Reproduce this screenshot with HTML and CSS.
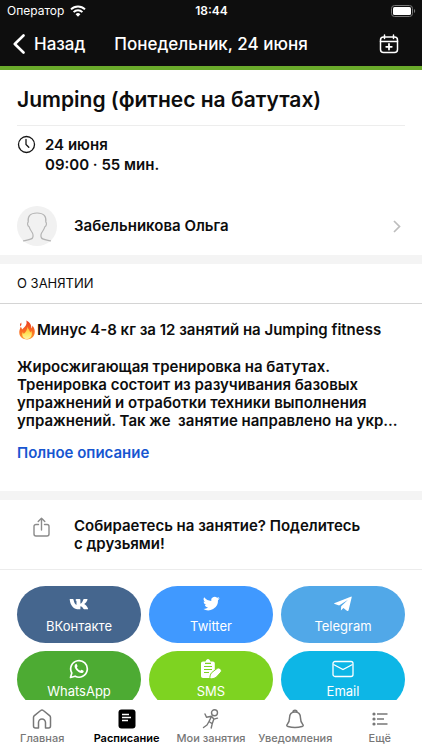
FILE: index.html
```html
<!DOCTYPE html>
<html lang="ru">
<head>
<meta charset="utf-8">
<meta name="viewport" content="width=device-width, initial-scale=1">
<title>Jumping (фитнес на батутах)</title>
<link rel="stylesheet" href="styles.css">
</head>
<body>
<div class="app">
  <header class="header">
    <div class="status">
      <div class="carrier">
        <span>Оператор</span>
        <svg width="16" height="12" viewBox="0 0 16 12" fill="none" stroke="#fff" stroke-width="2"><path d="M1 4.400a10 10 0 0 1 14 0M3.600 7.100a6.200 6.200 0 0 1 8.800 0"/><path d="M5.600 9.200a3.400 3.400 0 0 1 4.800 0L8 11.700z" fill="#fff" stroke="none"/></svg>
      </div>
      <time class="clock">18:44</time>
      <svg class="battery" width="25" height="12" viewBox="0 0 25 12"><rect x=".5" y=".5" width="21" height="11" rx="3" fill="none" stroke="#777"/><rect x="2" y="2" width="18" height="8" rx="1.500" fill="#fff"/><path d="M23 4v4c1.600-.8 1.600-3.200 0-4z" fill="#777"/></svg>
    </div>
    <div class="bar">
      <button class="back" type="button">
        <svg width="12" height="20" viewBox="0 0 12 20" fill="none" stroke="#fff" stroke-width="2.600" stroke-linecap="round" stroke-linejoin="round"><path d="M10.500 1.500 1.800 10l8.700 8.500"/></svg>
        <span>Назад</span>
      </button>
      <div class="date">Понедельник, 24 июня</div>
      <button class="calendar" type="button" aria-label="Добавить в календарь">
        <svg width="20" height="20" viewBox="0 0 20 20" fill="none" stroke="#fff" stroke-width="1.500" stroke-linecap="round"><rect x="1.500" y="3" width="17" height="15.500" rx="3"/><path d="M1.500 7.500h17M5.500 1v3.500M14.500 1v3.500"/><path d="M10 10v5.600M7.200 12.800h5.600" stroke-width="1.800"/></svg>
      </button>
    </div>
  </header>

  <main class="content">
    <section class="summary">
      <h1>Jumping (фитнес на батутах)</h1>
      <div class="when">
        <svg width="19" height="19" viewBox="0 0 19 19" fill="none" stroke="#151515" stroke-width="1.300" stroke-linecap="round"><circle cx="9.500" cy="9.500" r="8"/><path d="M9 4.500v5l2.800 2.800"/></svg>
        <p>24 июня<br>09:00 · 55 мин.</p>
      </div>
      <a class="trainer" href="#trainer">
        <svg class="avatar" width="40" height="40" viewBox="0 0 40 40"><circle cx="20" cy="20" r="20" fill="#f1f1f1"/><path d="M6.500 34.800c3.500-1 7.500-1 9-2.800 1-2 .5-4.500-1-6.500-1.300-1.800-1.900-3-2.400-4.800-1.700-1-2-3.800-.9-4.700C10.500 10.500 13 7 20 7s9.500 3.500 8.800 9c1.100.9.800 3.700-.9 4.700-.5 1.800-1.100 3-2.400 4.800-1.500 2-2 4.500-1 6.500 1.500 1.800 5.500 1.800 9 2.800" fill="none" stroke="#b4b4b4" stroke-width="1.200" stroke-linecap="round"/></svg>
        <span>Забельникова Ольга</span>
        <svg class="chevron" width="8" height="13" viewBox="0 0 8 13" fill="none" stroke="#bdbdbd" stroke-width="1.700"><path d="m1 1 5.500 5.500L1 12"/></svg>
      </a>
    </section>

    <section class="about">
      <h2>О ЗАНЯТИИ</h2>
      <div class="description">
        <p class="lead"><svg width="20" height="20" viewBox="0 0 20 20" role="img" aria-label="Огонь"><defs><linearGradient id="flame" x1="0" y1="0" x2="0" y2="1"><stop offset="0" stop-color="#e93b20"/><stop offset=".55" stop-color="#fa6b22"/><stop offset="1" stop-color="#ff9b2d"/></linearGradient><linearGradient id="core" x1="0" y1="0" x2="0" y2="1"><stop offset="0" stop-color="#ffb02e"/><stop offset=".6" stop-color="#ffe75e"/><stop offset="1" stop-color="#fff3a8"/></linearGradient></defs><path d="M9.200.5c4 1.800 5.500 4.700 5 8 .8-.7 1.300-1.700 1.200-2.900 2.200 2.700 2.800 5.400 2.200 8-.8 3.700-3.700 5.900-7.500 5.900-4.200 0-7.500-2.500-7.800-6.400-.2-2.500.8-4.300 1.400-6.300.8.8 1.200 1.700 1.300 2.800C8 7 10.700 4.300 9.200.5z" fill="url(#flame)"/><path d="m3 4 1.300-1.500.1 2.500L3 6.500z" fill="#f0532a"/><path d="M10.500 6.500c.3 2.500 2.500 3.800 2.600 6 .7-.4 1-1 1.100-1.800 1.700 3.500.1 8.300-4.100 8.300-3.800 0-5.700-3.400-4.500-6.800.6.500.9 1 1.100 1.700 2.200-1.700 3.500-4.200 3.800-7.400z" fill="url(#core)"/></svg><span>Минус 4-8 кг за 12 занятий на Jumping fitness</span></p>
        <p class="body">Жиросжигающая тренировка на батутах.<br>Тренировка состоит из разучивания базовых<br>упражнений и отработки техники выполнения<br>упражнений. Так же&nbsp; занятие направлено на укр...</p>
        <a class="more" href="#full">Полное описание</a>
      </div>
    </section>

    <section class="share">
      <div class="invite">
        <svg width="17" height="21" viewBox="0 0 17 21" fill="none" stroke="#8b8b8b" stroke-width="1.400" stroke-linecap="round" stroke-linejoin="round"><path d="M5.500 7.500H3a2 2 0 0 0-2 2V17a2 2 0 0 0 2 2h11a2 2 0 0 0 2-2V9.500a2 2 0 0 0-2-2h-2.500M8.500 13V1.500M5.200 4.500l3.300-3.300 3.300 3.300"/></svg>
        <p>Собираетесь на занятие? Поделитесь<br>с друзьями!</p>
      </div>
      <div class="targets">
        <button class="pill vk" type="button">
          <svg width="20" height="20" viewBox="0 0 20 20" fill="#fff"><path d="M10.200 15.300C4.500 15.300 1.400 11.600.7 5.400c0-.3.100-.4.400-.4h2.800c.3 0 .5.200.6.500.5 3 1.700 5.100 3 5.400V7.800c0-.9-.3-1.200-1-1.500 0-.8.700-1.300 1.600-1.300h2.500c.6 0 .8.300.8.900v3.900c1.300-.4 2.300-2.300 2.900-4.200.1-.4.400-.6.800-.6h2.900c.5 0 .7.300.5.800-.6 1.800-1.800 3.300-3.300 4.300 1.600.9 2.900 2.300 3.800 4.300.2.500 0 .9-.6.900h-3.200c-.4 0-.6-.2-.8-.5-.8-1.500-1.700-2.300-3-2.500v2.500c0 .4-.2.500-.6.500z"/></svg>
          <span>ВКонтакте</span>
        </button>
        <button class="pill twitter" type="button">
          <svg width="20" height="20" viewBox="0 0 24 24" fill="#fff"><path d="M22.500 5.200c-.7.300-1.500.6-2.400.7.900-.5 1.500-1.300 1.800-2.300-.8.500-1.700.8-2.600 1a4.100 4.100 0 0 0-7 3.800A11.700 11.700 0 0 1 3.800 4a4.100 4.100 0 0 0 1.300 5.500c-.7 0-1.300-.2-1.900-.5 0 2 1.400 3.700 3.300 4.100-.6.200-1.200.2-1.900.1.500 1.600 2 2.800 3.900 2.900A8.300 8.300 0 0 1 2.400 17.800 11.700 11.700 0 0 0 20.400 7.400c.8-.6 1.500-1.300 2.100-2.200z"/></svg>
          <span>Twitter</span>
        </button>
        <button class="pill telegram" type="button">
          <svg width="20" height="20" viewBox="0 0 20 20" fill="#fff"><path d="M18.400 2.500 1.800 9c-.8.300-.8.900 0 1.100l4.300 1.400L15 5.700 8.200 12.300l-.3 4.100 2.500-2.300 3.800 2.800c.7.400 1.200.2 1.400-.6l3.100-13c.1-.7-.2-1-.3-.8z"/></svg>
          <span>Telegram</span>
        </button>
        <button class="pill whatsapp" type="button">
          <svg width="20" height="20" viewBox="0 0 20 20" fill="none" stroke="#fff" stroke-width="1.700" stroke-linejoin="round"><path d="m1.500 18.500 1.300-4.500a8.300 8.300 0 1 1 3.300 3.200z"/><path d="M6.500 5.200c.5-.5 1.100-.4 1.300.1l.7 1.700c.2.600-.7 1.200-.6 1.500.7 1.500 1.800 2.500 3.300 3.200.4.100 1-1.100 1.500-.9l1.800.9c.4.200.2 1.500-.6 2-3 2-9.300-3.900-8.200-7.100.2-.6.500-1.100.8-1.400z" fill="#fff" stroke="none"/></svg>
          <span>WhatsApp</span>
        </button>
        <button class="pill sms" type="button">
          <svg width="22" height="20" viewBox="0 0 22 20"><path d="M5.500 2.500C6 1 7 0 8 0s2 1 2.500 2.500h2.300c1.200 0 2 .8 2 2V17c0 1.200-.8 2-2 2H3c-1.200 0-2-.8-2-2V4.500c0-1.200.8-2 2-2z" fill="#fff"/><path d="M5 4.300h6M4 7.500h8M4 10.500h8M4 13.500h5" stroke="#7ed321" stroke-width="1.200"/><path d="M17 9.500c1.800-1.800 5.600 1.300 4 3.500l-4.500 5c-1.500 1.500-5.700 2.300-6.400 1.600s.2-4.600 1.500-5.900z" fill="#fff" stroke="#7ed321"/></svg>
          <span>SMS</span>
        </button>
        <button class="pill email" type="button">
          <svg width="22" height="20" viewBox="0 0 22 20" fill="none" stroke="#fff" stroke-width="1.300"><rect x="1" y="2.500" width="20" height="15" rx="2"/><path d="M1.500 5.500 11 10.500l9.500-5"/></svg>
          <span>Email</span>
        </button>
      </div>
    </section>
  </main>

  <nav class="tabs">
    <a href="#home"><svg width="20" height="20" viewBox="0 0 20 20" fill="none" stroke="#777" stroke-width="1.500" stroke-linejoin="round"><path d="M1.500 8.500c0-.8.300-1.300.9-1.800l6.300-5.200c.8-.7 1.800-.7 2.600 0l6.300 5.200c.6.500.9 1 .9 1.800V17c0 1.200-.8 2-2 2h-3v-5.500a3.500 3.500 0 0 0-7 0V19h-3c-1.200 0-2-.8-2-2z"/></svg><span>Главная</span></a>
    <a class="active" href="#schedule" aria-current="page"><svg width="20" height="20" viewBox="0 0 20 20"><rect x="1.500" y=".5" width="17" height="19" rx="3" fill="#000"/><path d="M5 5.500h7M5 8.500h9M5 11.500h6" stroke="#fff" stroke-width="1.400"/></svg><span>Расписание</span></a>
    <a href="#classes"><svg width="20" height="20" viewBox="0 0 20 20" fill="none" stroke="#777" stroke-width="1.400" stroke-linecap="round" stroke-linejoin="round"><circle cx="13.500" cy="3.800" r="3"/><path d="m4 5 1.500 3.200 5-1 2.500 3 3.500-1M10.500 7.500 8 12.500l3.200 2.300-1 4.200M8 12.500 6 16l-3.500 2.500M12.800 10.200l-1.600 4.600"/></svg><span>Мои занятия</span></a>
    <a href="#alerts"><svg width="20" height="20" viewBox="0 0 20 20" fill="none" stroke="#777" stroke-width="1.500" stroke-linejoin="round"><path d="M10 3c3.700 0 5.500 2.800 5.500 6 0 3.500.7 5 2.300 6.500.8.800.3 1.700-.8 2-4.500 1.300-9.500 1.300-14 0-1.100-.3-1.600-1.200-.8-2C3.800 14 4.500 12.500 4.500 9c0-3.200 1.800-6 5.500-6zM8 3.200a2 2 0 0 1 4 0"/></svg><span>Уведомления</span></a>
    <a href="#more"><svg width="20" height="20" viewBox="0 0 20 20" fill="none" stroke="#777" stroke-width="1.500"><path d="M7 5h10.500M7 10h7M7 15h10.500"/><g fill="#777" stroke="none"><circle cx="4" cy="5" r="1.600"/><circle cx="4" cy="10" r="1.600"/><circle cx="4" cy="15" r="1.600"/></g></svg><span>Ещё</span></a>
  </nav>
</div>
</body>
</html>
```
FILE: styles.css
```css
* { box-sizing: border-box; }

body {
  margin: 0;
  background: #fff;
  color: #0d0d0d;
  font: 600 15px/18px Inter, "Liberation Sans", sans-serif;
}

h1, h2, p { margin: 0; }
a { color: inherit; text-decoration: none; }
svg { display: block; flex: none; }
button { border: 0; padding: 0; background: none; color: #fff; font: inherit; cursor: pointer; }

.app { display: flex; flex-direction: column; height: 100vh; }

.header { flex: none; background: #0e0e0e; color: #fff; border-bottom: 4px solid #6aaa2b; }

.status {
  display: grid;
  grid-template-columns: 1fr auto 1fr;
  align-items: center;
  height: 22px;
  padding: 0 6px 0 7px;
  font-size: 12px;
  font-weight: 400;
}
.carrier { display: flex; align-items: center; gap: 6px; }
.clock { font-weight: 600; }
.battery { justify-self: end; }

.bar {
  display: grid;
  grid-template-columns: 1fr auto 1fr;
  align-items: center;
  height: 44px;
  padding: 0 13px;
  font-size: 17px;
  font-weight: 500;
}
.back { display: flex; align-items: center; gap: 9px; }
.calendar { justify-self: end; padding-right: 10px; }

.content { flex: 1; min-height: 0; overflow: hidden; }

.summary { padding: 0 17px; }
h1 {
  padding: 15px 0 10px;
  border-bottom: 1px solid #ededed;
  font-size: 21px;
  line-height: 30px;
  font-weight: 600;
}
.when { display: flex; gap: 9px; padding-top: 9px; line-height: 20px; }
.trainer { display: flex; align-items: center; gap: 17px; padding: 31px 4px 9px 0; }
.chevron { margin-left: auto; }

.about, .share { border-top: 9px solid #f4f4f4; }
h2 {
  padding: 10px 17px;
  border-bottom: 1px solid #d4d4d4;
  font-size: 13px;
  line-height: 19px;
  font-weight: 400;
}
.description { padding: 16px 17px 29px; }
.lead { display: flex; align-items: center; line-height: 20px; }
.body { padding: 18px 0 14px; white-space: nowrap; }
.more { color: #1756d1; }

.invite {
  display: flex;
  gap: 24px;
  padding: 17px 17px 16px 33px;
  border-bottom: 1px solid #ececec;
}

.targets { display: grid; grid-template-columns: repeat(3, 1fr); gap: 8px; padding: 16px 17px; }
.pill {
  display: flex;
  flex-direction: column;
  align-items: center;
  justify-content: space-between;
  height: 57px;
  padding: 8px 0;
  border-radius: 29px;
  font-size: 13px;
  font-weight: 400;
}
.vk { background: #45668e; }
.twitter { background: #4099ff; }
.telegram { background: #51a8e8; }
.whatsapp { background: #4dab33; }
.sms { background: #7ed321; }
.email { background: #0db6e6; }

.tabs {
  flex: none;
  display: grid;
  grid-template-columns: repeat(5, 1fr);
  height: 50px;
  padding-top: 9px;
  background: #fff;
  color: #777;
  font-size: 11px;
  font-weight: 500;
}
.tabs a { display: flex; flex-direction: column; align-items: center; white-space: nowrap; }
.tabs .active { color: #000; font-weight: 600; }
```
